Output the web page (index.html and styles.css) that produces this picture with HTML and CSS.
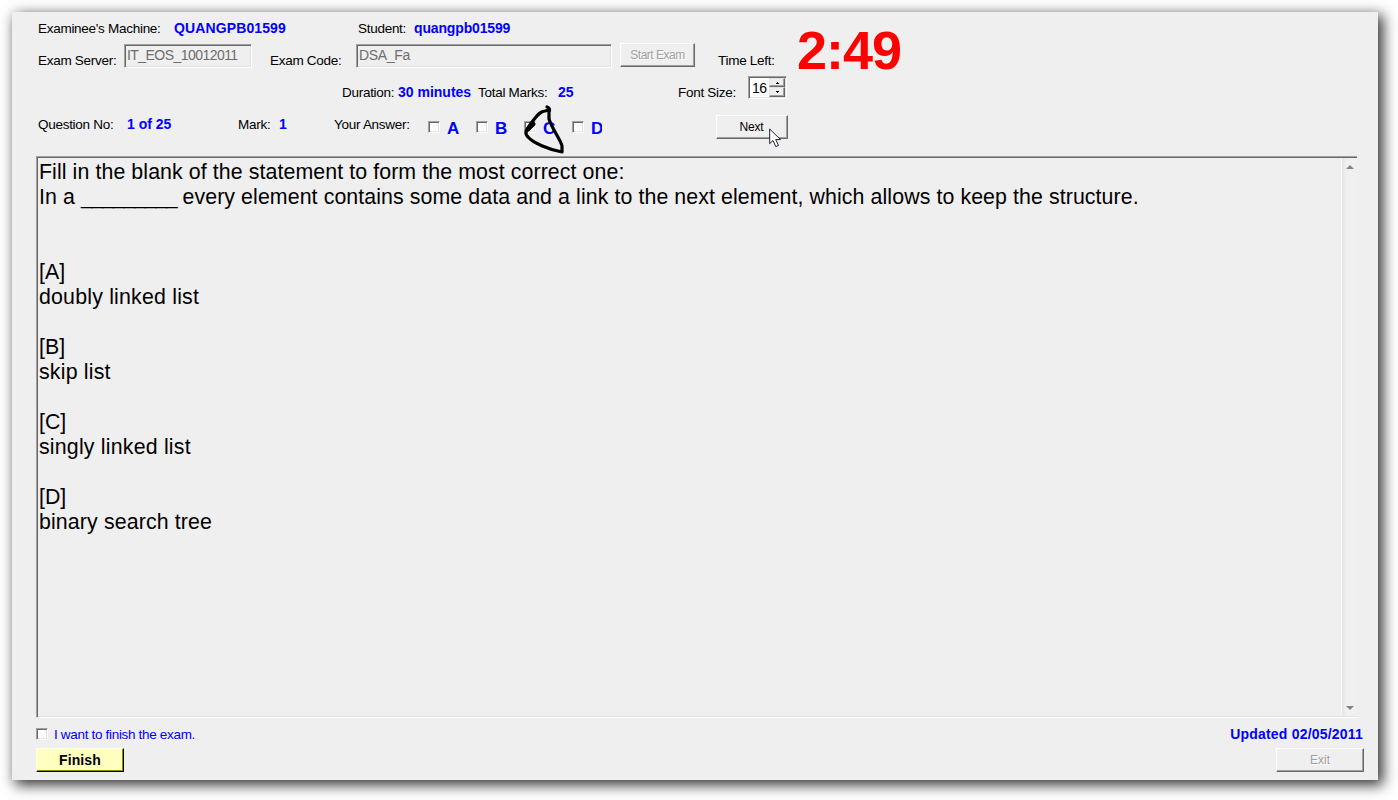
FILE: index.html
```html
<!DOCTYPE html>
<html lang="en">
<head>
<meta charset="utf-8">
<title>Exam Client</title>
<link rel="stylesheet" href="styles.css">
</head>
<body>
<main class="window">
  <section class="row row-identity">
    <span class="label">Examinee's Machine:</span>
    <b class="value machine">QUANGPB01599</b>
    <span class="label">Student:</span>
    <b class="value student">quangpb01599</b>
  </section>
  <section class="row row-server">
    <span class="label low">Exam Server:</span>
    <div class="field field-server">IT_EOS_10012011</div>
    <span class="label low">Exam Code:</span>
    <div class="field field-code">DSA_Fa</div>
    <button class="btn btn-start" disabled>Start Exam</button>
    <span class="label low">Time Left:</span>
    <b class="timer">2:49</b>
  </section>
  <section class="row row-duration">
    <span class="label low">Duration:</span>
    <b class="value low">30 minutes</b>
    <span class="label low">Total Marks:</span>
    <b class="value low">25</b>
    <span class="label low">Font Size:</span>
    <div class="spinner">
      <span class="spin-value">16</span>
      <div class="spin-buttons">
        <i class="spin"><svg width="3" height="2"><path d="M1 0h1v1h1v1H0V1h1z"/></svg></i>
        <i class="spin"><svg width="3" height="2"><path d="M0 0h3v1H2v1H1V1H0z"/></svg></i>
      </div>
    </div>
  </section>
  <section class="row row-question">
    <span class="label">Question No:</span>
    <b class="value">1 of 25</b>
    <span class="label">Mark:</span>
    <b class="value">1</b>
    <span class="label">Your Answer:</span>
    <div class="answers">
      <label class="answer"><i class="check"></i>A</label>
      <label class="answer"><i class="check"></i>B</label>
      <label class="answer"><i class="check"></i>C
        <svg class="scribble" width="46" height="54" viewBox="520 104 46 54"><path d="M547 108C550 109 550 111 549 113L549 120C552 130 561 141 562 147L562 153C550 151 533 144 528 138C524 134 526 131 532 123C537 117 540 112 545 112L549 111M528 131L534 125"/></svg>
      </label>
      <label class="answer"><i class="check"></i><span class="light">D</span></label>
    </div>
    <button class="btn btn-next">Next
      <svg class="cursor" width="13" height="20" viewBox="0 0 13 20"><path d="M.7 1V15.6L4 12.5L6.8 18.6L9.5 17.4L6.7 11.6H11.5Z"/></svg>
    </button>
  </section>
  <section class="paper">
    <div class="question"><span class="lead">Fill in the blank of the statement to form the most correct one:</span>
<span class="lead">In a <span class="blank">_________</span> every element contains some data and a link to the next element, which allows to keep the structure.</span>


[A]
<span class="option">doubly linked list</span>

[B]
<span class="option">skip list</span>

[C]
<span class="option">singly linked list</span>

[D]
<span class="option">binary search tree</span></div>
    <div class="scrollbar">
      <svg width="8" height="4"><path d="M4 0L8 4H0Z"/></svg>
      <svg width="8" height="4"><path d="M0 0H8L4 4Z"/></svg>
    </div>
  </section>
  <footer class="footer">
    <div class="finish-area">
      <label class="finish-check"><i class="check"></i><span>I want to finish the exam.</span></label>
      <button class="btn btn-finish">Finish</button>
    </div>
    <div class="exit-area">
      <b class="value updated">Updated 02/05/2011</b>
      <button class="btn btn-exit" disabled>Exit</button>
    </div>
  </footer>
</main>
</body>
</html>
```
FILE: styles.css
```css
* { box-sizing: border-box; }
body {
  margin: 0;
  padding: 12px;
  height: 800px;
  overflow: hidden;
  background: #fff;
  color: #000;
  font: 13.5px/16px "Liberation Sans", Arial, sans-serif;
}
.window {
  width: 1366px;
  height: 768px;
  padding: 8px 14px 0 24px;
  background: #efefef;
  box-shadow: 4px 4px 13px 1px rgba(0, 0, 0, .8);
}
.row { display: grid; align-items: start; padding-left: 2px; white-space: nowrap; }
.row-identity { grid-template-columns: 136px 184px 56px auto; height: 23px; }
.row-server { grid-template-columns: 86px 146px 86px 264px 98px 79px auto; height: 32px; }
.row-duration { grid-template-columns: 56px 80px 80px 120px 70px 38px; padding-left: 306px; height: 40px; }
.row-question { grid-template-columns: 89px 111px 41px 55px 94px 288px 72px; height: 41px; }
.label { padding-top: 1px; letter-spacing: -.28px; }
.value { font-size: 14px; color: #00f; }
.low { margin-top: 9px; }
.row-question > .label, .row-question > .value { margin-top: 1px; }
.machine { letter-spacing: .12px; }
.student { letter-spacing: -.15px; }
.field {
  height: 24px;
  margin-top: 1px;
  padding: 2px 0 0 2px;
  border: 1px solid;
  border-color: #a0a0a0 #fff #fff #a0a0a0;
  box-shadow: inset 1px 1px #696969, inset -1px -1px #e3e3e3;
  color: #6d6d6d;
  font-size: 14px;
}
.field-server { width: 128px; letter-spacing: -.55px; }
.field-code { width: 256px; letter-spacing: -.3px; }
.btn {
  position: relative;
  padding: 0;
  border: 1px solid;
  border-color: #fff #696969 #696969 #fff;
  box-shadow: inset -1px -1px #a0a0a0;
  background: #efefef;
  color: #000;
  font: 12px/14px "Liberation Sans", Arial, sans-serif;
}
.btn:disabled { color: #a0a0a0; text-shadow: 1px 1px #fff; }
.btn-start { width: 75px; height: 24px; margin-top: 0; letter-spacing: -.5px; }
.btn-next { width: 72px; height: 24px; padding-right: 1px; letter-spacing: -.2px; }
.timer { margin-top: -21px; color: #f00; font-size: 54px; line-height: 56px; letter-spacing: -1px; }
.spinner {
  display: flex;
  width: 39px;
  height: 23px;
  margin-top: 1px;
  padding: 1px;
  border: 1px solid;
  border-color: #a0a0a0 #fff #fff #a0a0a0;
  box-shadow: inset 1px 1px #696969, inset -1px -1px #e3e3e3;
  background: #fff;
}
.spin-value { width: 20px; padding-left: 2px; font-size: 14px; line-height: 20px; letter-spacing: -.5px; }
.spin-buttons { display: grid; grid-template-rows: 9px 10px; width: 16px; }
.spin {
  display: flex;
  align-items: center;
  justify-content: center;
  border: 1px solid;
  border-color: #e3e3e3 #696969 #696969 #e3e3e3;
  box-shadow: inset -1px -1px #a0a0a0;
  background: #efefef;
}
.answers { display: flex; padding-top: 2px; }
.answer {
  position: relative;
  display: flex;
  align-items: center;
  width: 48px;
  height: 24px;
  color: #00f;
  font: bold 17px/24px "Liberation Sans", Arial, sans-serif;
}
.answers .check { margin: -4px 7px 0 0; }
.light { width: 11px; overflow: hidden; }
.check {
  width: 12px;
  height: 12px;
  border: 1px solid;
  border-color: #a0a0a0 #fff #fff #a0a0a0;
  background: #fff;
  box-shadow: inset 1px 1px #696969, inset -1px -1px #e3e3e3;
}
.scribble { position: absolute; left: -4px; top: -14px; fill: none; stroke: #000; stroke-width: 3.2; stroke-linecap: round; stroke-linejoin: round; }
.cursor { position: absolute; left: 52px; top: 12px; fill: #fff; stroke: #1c2030; stroke-width: 1; }
.paper {
  display: flex;
  width: 1321px;
  height: 562px;
  padding: 1px 0 1px 1px;
  border: 1px solid;
  border-color: #a0a0a0 transparent #fff #a0a0a0;
  border-right-width: 0;
  box-shadow: inset 1px 1px #696969, inset 0 -1px #e3e3e3;
}
.question {
  flex: 1;
  padding: 2px 0 0 1px;
  white-space: pre;
  font-size: 21.33px;
  line-height: 25px;
}
.lead { letter-spacing: .09px; }
.blank { letter-spacing: -1.25px; }
.option { letter-spacing: .2px; }
.option:last-child { letter-spacing: .13px; }
.scrollbar {
  display: flex;
  flex-direction: column;
  justify-content: space-between;
  align-items: center;
  width: 16px;
  padding: 7px 0 6px;
  border-left: 1px solid #fafafa;
  background: linear-gradient(90deg, #e6e6e6, #f0f0f0 30%);
  fill: #858585;
}
.footer { display: flex; justify-content: space-between; padding-top: 8px; }
.finish-check { display: flex; align-items: center; gap: 6px; height: 16px; color: #00f; letter-spacing: -.32px; }
.finish-check span { padding-top: 1px; }
.btn-finish {
  display: block;
  width: 88px;
  height: 24px;
  margin-top: 6px;
  border-color: #ffffe8 #000 #000 #ffffe8;
  box-shadow: inset -1px -1px #8c8c00;
  background: #ffffc0;
  font-size: 14px;
  font-weight: bold;
  letter-spacing: .1px;
}
.exit-area { display: flex; flex-direction: column; align-items: flex-end; }
.btn-exit { width: 88px; height: 24px; margin-top: 6px; }
.updated { margin-right: 1px; white-space: nowrap; letter-spacing: .2px; }
```
